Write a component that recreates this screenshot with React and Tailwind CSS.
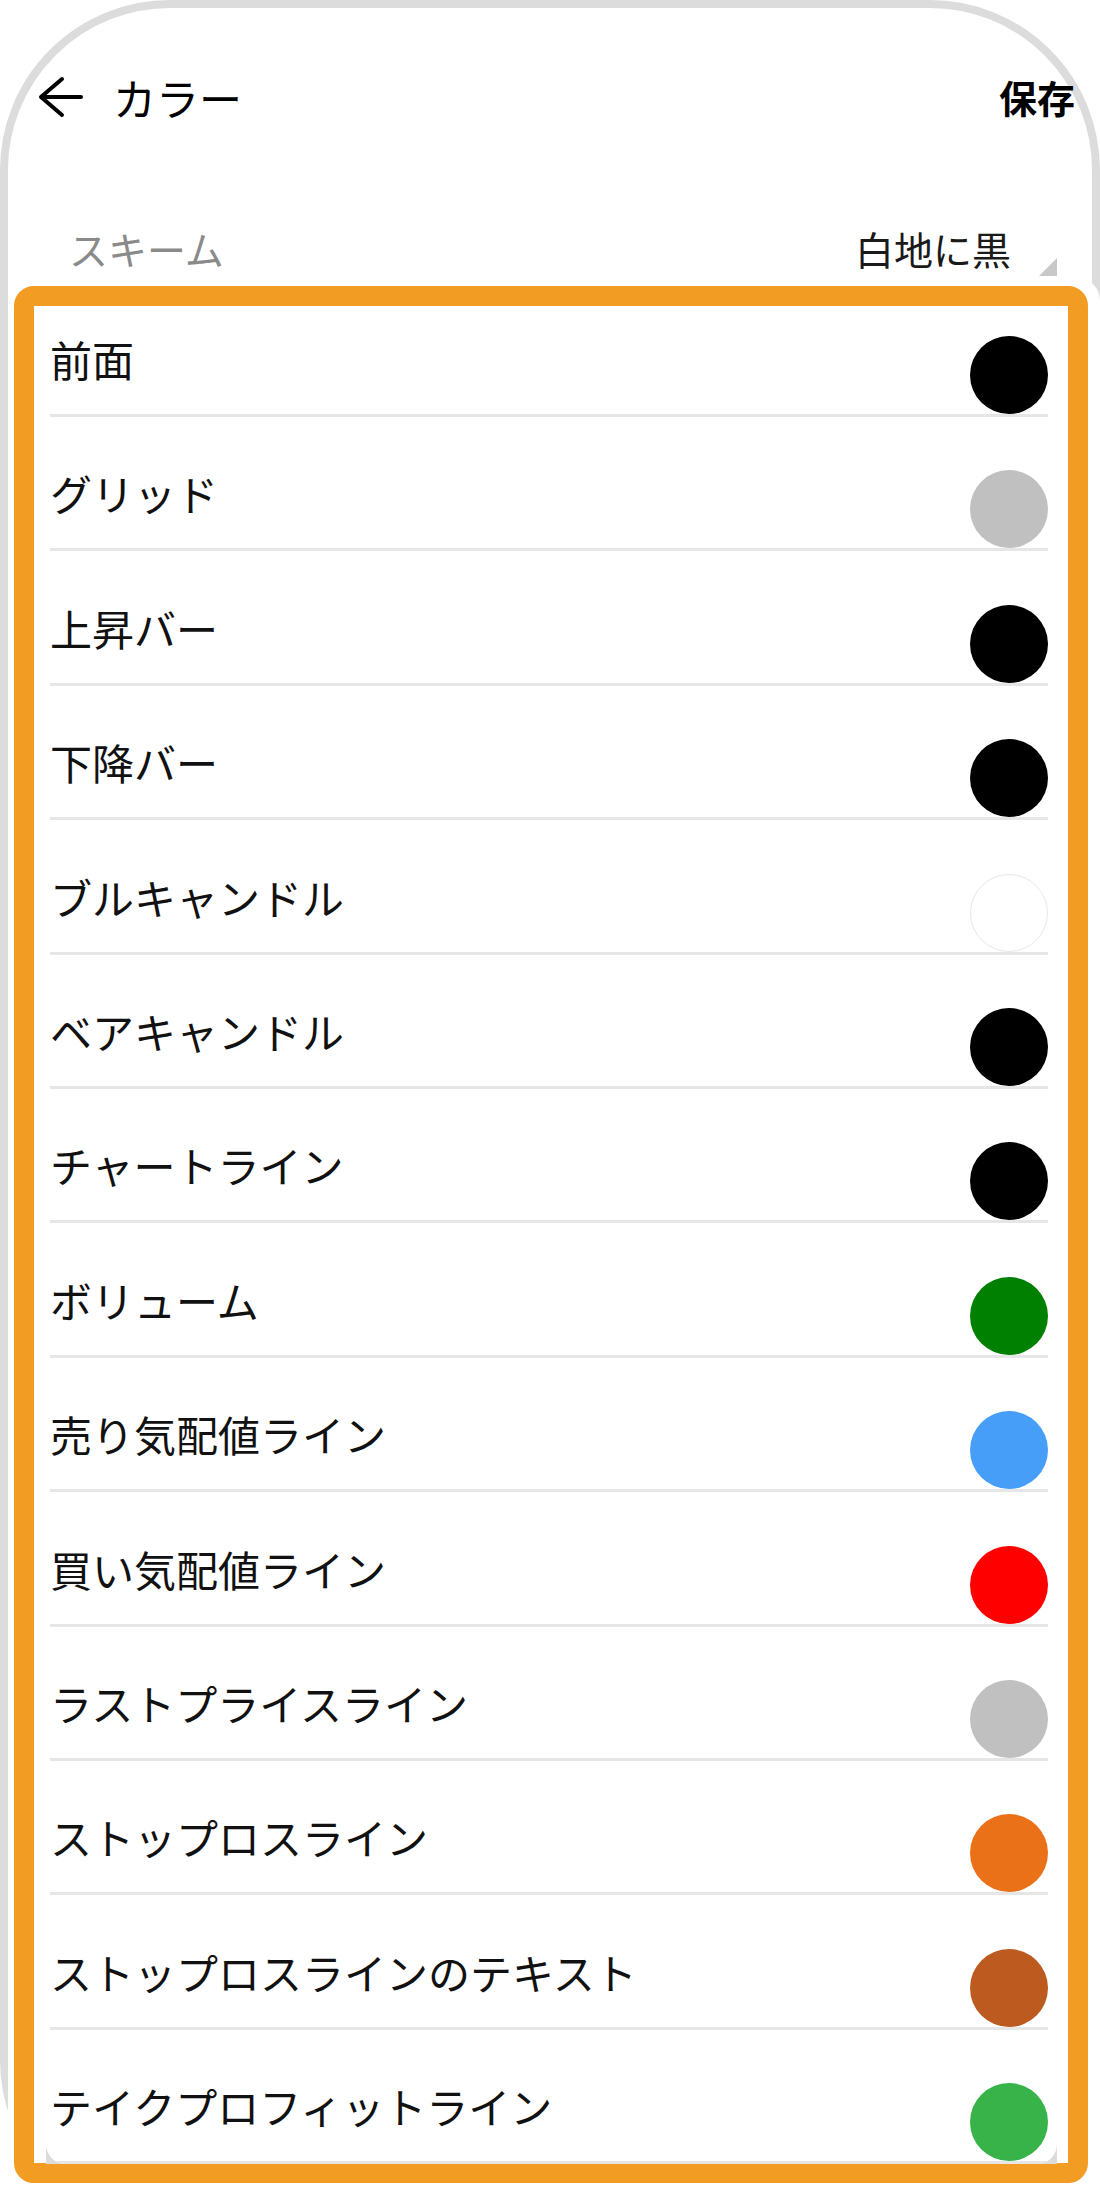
import React from 'react';

const rows = [
  { label: '前面', color: '#000000' },
  { label: 'グリッド', color: '#c0c0c0' },
  { label: '上昇バー', color: '#000000' },
  { label: '下降バー', color: '#000000' },
  { label: 'ブルキャンドル', color: '#ffffff', outline: true },
  { label: 'ベアキャンドル', color: '#000000' },
  { label: 'チャートライン', color: '#000000' },
  { label: 'ボリューム', color: '#008000' },
  { label: '売り気配値ライン', color: '#479ef9' },
  { label: '買い気配値ライン', color: '#ff0000' },
  { label: 'ラストプライスライン', color: '#c0c0c0' },
  { label: 'ストップロスライン', color: '#ea7118' },
  { label: 'ストップロスラインのテキスト', color: '#bc5a20' },
  { label: 'テイクプロフィットライン', color: '#37b34a' },
];

function ColorRow({ label, color, outline, first }) {
  return (
    <div
      className={`flex shrink-0 items-end justify-between border-b-[3px] border-[#e6e6e6] ${
        first ? 'h-[111px]' : 'h-[134.4px]'
      }`}
    >
      <span className="mb-[35px] text-[42px] leading-[40px] text-[#111]">{label}</span>
      <span
        className={`block h-[78px] w-[78px] shrink-0 rounded-full ${
          outline ? 'border border-[#e8e8e8]' : ''
        }`}
        style={{ backgroundColor: color }}
      />
    </div>
  );
}

export default function App() {
  return (
    <div className="relative h-[2196px] w-[1100px] overflow-hidden bg-white font-['Noto_Sans_CJK_JP',sans-serif]">
      {/* phone frame */}
      <div className="h-[2230px] rounded-[170px] border-[8px] border-[#dcdcdc]">
        <div className="flex h-[178px] items-center justify-between pl-[29px] pr-[17px]">
          <div className="flex items-center">
            <svg width="46" height="44" viewBox="0 0 46 44" fill="none" stroke="#000" strokeWidth="4" strokeLinecap="round" strokeLinejoin="round">
              <path d="M44 22H4M25 4L4 22L25 40" />
            </svg>
            <span className="ml-[30px] text-[43px] leading-none text-black">カラー</span>
          </div>
          <span className="text-[38px] font-bold leading-none text-black">保存</span>
        </div>

        <div className="flex h-[124px] items-center justify-between pl-[61px] pr-[35px]">
          <span className="text-[39px] leading-none text-[#8a8a8a]">スキーム</span>
          <div className="flex items-center">
            <span className="text-[39px] leading-none text-[#1a1a1a]">白地に黒</span>
            <svg className="ml-[28px] mt-[38px]" width="18" height="18" viewBox="0 0 18 18">
              <path d="M18 0V18H0Z" fill="#c8c8c8" />
            </svg>
          </div>
        </div>
      </div>

      {/* magnified highlight */}
      <div className="absolute bottom-0 left-[8px] right-0 top-[277px] rounded-[24px] bg-white pb-[13px] pl-[6px] pr-[12px] pt-[9px]">
        <div className="flex h-full flex-col rounded-[20px] border-[20px] border-[#f29c24] bg-white pb-[11px] pl-[12px] pr-[11px]">
          <div className="flex-1 bg-[#dcdcdc]">
            <div className="flex h-full flex-col overflow-hidden rounded-b-[20px] bg-white pl-[4px] pr-[9px]">
              {rows.map((r, i) => (
                <ColorRow key={r.label} {...r} first={i === 0} />
              ))}
            </div>
          </div>
        </div>
      </div>
    </div>
  );
}
